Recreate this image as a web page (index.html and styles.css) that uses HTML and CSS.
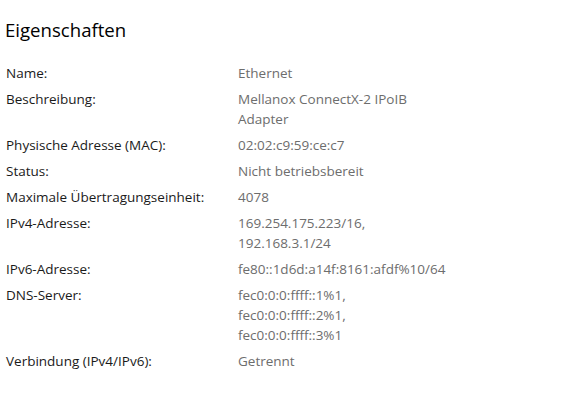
FILE: index.html
```html
<!DOCTYPE html>
<html lang="de">
<head>
<meta charset="utf-8">
<title>Eigenschaften</title>
<link rel="stylesheet" href="styles.css">
</head>
<body>
<main class="page">
  <h1 class="title">Eigenschaften</h1>
  <dl class="props">
    <dt>Name:</dt><dd>Ethernet</dd>
    <dt>Beschreibung:</dt><dd>Mellanox ConnectX-2 IPoIB<br>Adapter</dd>
    <dt>Physische Adresse (MAC):</dt><dd>02:02:c9:59:ce:c7</dd>
    <dt>Status:</dt><dd>Nicht betriebsbereit</dd>
    <dt>Maximale Übertragungseinheit:</dt><dd>4078</dd>
    <dt>IPv4-Adresse:</dt><dd>169.254.175.223/16,<br>192.168.3.1/24</dd>
    <dt>IPv6-Adresse:</dt><dd>fe80::1d6d:a14f:8161:afdf%10/64</dd>
    <dt>DNS-Server:</dt><dd>fec0:0:0:ffff::1%1,<br>fec0:0:0:ffff::2%1,<br>fec0:0:0:ffff::3%1</dd>
    <dt>Verbindung (IPv4/IPv6):</dt><dd>Getrennt</dd>
  </dl>
</main>
</body>
</html>
```

FILE: styles.css
```css
html, body {
  margin: 0;
  padding: 0;
  background: #ffffff;
}
.page {
  padding: 16px 0 0 5px;
  font-family: "Open Sans", "Noto Sans", "Liberation Sans", sans-serif;
  color: #1a1a1a;
}
.title {
  margin: 0;
  font-size: 18.6px;
  line-height: 28px;
  font-weight: 400;
  color: #000000;
}
.props {
  margin: 19px 0 0 1px;
  display: grid;
  grid-template-columns: 232px auto;
  row-gap: 6px;
  font-size: 13.5px;
  line-height: 20px;
}
.props dt {
  margin: 0;
  color: #1a1a1a;
}
.props dd {
  margin: 0;
  color: #6d6d6d;
}
```
